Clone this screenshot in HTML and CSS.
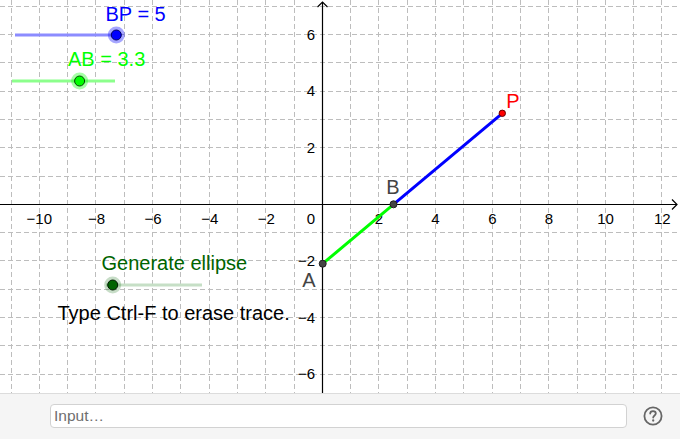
FILE: index.html
```html
<!DOCTYPE html>
<html>
<head>
<meta charset="utf-8">
<link rel="stylesheet" href="styles.css">
</head>
<body>
<div class="app">
  <div class="graph">
    <svg class="canvas" width="680" height="393" viewBox="0 0 680 393">
      <g class="grid">
        <line x1="11.5" y1="0" x2="11.5" y2="393"/>
        <line x1="39.5" y1="0" x2="39.5" y2="393"/>
        <line x1="67.5" y1="0" x2="67.5" y2="393"/>
        <line x1="95.5" y1="0" x2="95.5" y2="393"/>
        <line x1="124.5" y1="0" x2="124.5" y2="393"/>
        <line x1="152.5" y1="0" x2="152.5" y2="393"/>
        <line x1="180.5" y1="0" x2="180.5" y2="393"/>
        <line x1="209.5" y1="0" x2="209.5" y2="393"/>
        <line x1="237.5" y1="0" x2="237.5" y2="393"/>
        <line x1="265.5" y1="0" x2="265.5" y2="393"/>
        <line x1="294.5" y1="0" x2="294.5" y2="393"/>
        <line x1="350.5" y1="0" x2="350.5" y2="393"/>
        <line x1="378.5" y1="0" x2="378.5" y2="393"/>
        <line x1="407.5" y1="0" x2="407.5" y2="393"/>
        <line x1="435.5" y1="0" x2="435.5" y2="393"/>
        <line x1="463.5" y1="0" x2="463.5" y2="393"/>
        <line x1="492.5" y1="0" x2="492.5" y2="393"/>
        <line x1="520.5" y1="0" x2="520.5" y2="393"/>
        <line x1="548.5" y1="0" x2="548.5" y2="393"/>
        <line x1="577.5" y1="0" x2="577.5" y2="393"/>
        <line x1="605.5" y1="0" x2="605.5" y2="393"/>
        <line x1="633.5" y1="0" x2="633.5" y2="393"/>
        <line x1="661.5" y1="0" x2="661.5" y2="393"/>
        <line x1="0" y1="6.5" x2="680" y2="6.5"/>
        <line x1="0" y1="34.5" x2="680" y2="34.5"/>
        <line x1="0" y1="62.5" x2="680" y2="62.5"/>
        <line x1="0" y1="91.5" x2="680" y2="91.5"/>
        <line x1="0" y1="119.5" x2="680" y2="119.5"/>
        <line x1="0" y1="147.5" x2="680" y2="147.5"/>
        <line x1="0" y1="176.5" x2="680" y2="176.5"/>
        <line x1="0" y1="232.5" x2="680" y2="232.5"/>
        <line x1="0" y1="260.5" x2="680" y2="260.5"/>
        <line x1="0" y1="289.5" x2="680" y2="289.5"/>
        <line x1="0" y1="317.5" x2="680" y2="317.5"/>
        <line x1="0" y1="345.5" x2="680" y2="345.5"/>
        <line x1="0" y1="374.5" x2="680" y2="374.5"/>
      </g>
      <g class="axes">
        <line x1="0" y1="204.5" x2="677" y2="204.5"/>
        <polyline points="672,199.5 677,204.5 672,209.5"/>
        <line x1="322.5" y1="2" x2="322.5" y2="393"/>
        <polyline points="317.5,7 322.5,2 327.5,7"/>
      </g>
      <g class="ticks-x">
        <text x="39.3" y="224">−10</text>
        <text x="96.5" y="224">−8</text>
        <text x="153" y="224">−6</text>
        <text x="209.8" y="224">−4</text>
        <text x="266.3" y="224">−2</text>
        <text x="378.9" y="224">2</text>
        <text x="435.5" y="224">4</text>
        <text x="492.3" y="224">6</text>
        <text x="548.9" y="224">8</text>
        <text x="605.5" y="224">10</text>
        <text x="662.3" y="224">12</text>
      </g>
      <g class="ticks-y">
        <text x="315" y="224">0</text>
        <text x="315" y="40">6</text>
        <text x="315" y="96.3">4</text>
        <text x="315" y="152.8">2</text>
        <text x="315" y="266.3">−2</text>
        <text x="315" y="322.8">−4</text>
        <text x="315" y="379.3">−6</text>
      </g>

      <line class="seg-ab" x1="322.7" y1="263.7" x2="393.5" y2="204.3"/>
      <line class="seg-bp" x1="393.5" y1="204.3" x2="502.3" y2="113.3"/>
      <circle class="pt-dark" cx="322.7" cy="263.7" r="3.5"/>
      <circle class="pt-dark" cx="393.5" cy="204.3" r="3.5"/>
      <circle class="pt-red" cx="502.3" cy="113.3" r="3.2"/>
      <text class="lbl lbl-dark" x="386.3" y="193.5">B</text>
      <text class="lbl lbl-red" x="506.3" y="108.3">P</text>
      <text class="lbl lbl-dark" x="302.3" y="287.3">A</text>

      <text class="lbl lbl-blue" x="105.5" y="21">BP = 5</text>
      <line class="track-blue" x1="15" y1="35" x2="116" y2="35"/>
      <circle class="halo-blue" cx="116.3" cy="35" r="8.5"/>
      <circle class="knob-blue" cx="116.3" cy="35" r="5"/>

      <text class="lbl lbl-green" x="68" y="65.8">AB = 3.3</text>
      <line class="track-green" x1="12" y1="81" x2="115" y2="81"/>
      <circle class="halo-green" cx="79.6" cy="81" r="8.5"/>
      <circle class="knob-green" cx="79.6" cy="81" r="5"/>

      <text class="lbl lbl-dkgreen" x="101.5" y="269.5">Generate ellipse</text>
      <line class="track-dkgreen" x1="106" y1="285" x2="202" y2="285"/>
      <circle class="halo-dkgreen" cx="112.7" cy="285" r="8.5"/>
      <circle class="knob-dkgreen" cx="112.7" cy="285" r="5"/>

      <text class="lbl lbl-black" x="57.5" y="320">Type Ctrl-F to erase trace.</text>
    </svg>
  </div>
  <div class="inputbar">
    <div class="input">Input…</div>
    <svg class="help" width="20" height="20" viewBox="0 0 20 20">
      <circle cx="10" cy="10" r="8.6" fill="none" stroke="#666" stroke-width="1.8"/>
      <path d="M7.2 7.6 C7.2 5.9 8.5 5.1 10 5.1 C11.6 5.1 12.8 6 12.8 7.5 C12.8 9.4 10.2 9.5 10.2 11.6" fill="none" stroke="#666" stroke-width="1.8" stroke-linecap="round"/>
      <circle cx="10.2" cy="14.5" r="1.15" fill="#666"/>
    </svg>
  </div>
</div>
</body>
</html>
```

FILE: styles.css
```css
html, body {
  margin: 0;
  padding: 0;
  background: #ffffff;
}

.app {
  width: 680px;
  height: 439px;
  display: flex;
  flex-direction: column;
  overflow: hidden;
  font-family: "Liberation Sans", Arial, sans-serif;
}

.graph {
  height: 393px;
  flex: none;
  background: #ffffff;
}

.canvas {
  display: block;
}

.grid line {
  stroke: #bdbdbd;
  stroke-width: 1;
  stroke-dasharray: 5 3;
}

.axes line,
.axes polyline {
  stroke: #000000;
  stroke-width: 1.2;
  fill: none;
}

.ticks-x text,
.ticks-y text {
  font-family: "Liberation Sans", Arial, sans-serif;
  font-size: 15px;
  fill: #000000;
}

.ticks-x text {
  text-anchor: middle;
}

.ticks-y text {
  text-anchor: end;
}

.seg-ab {
  stroke: #00ff00;
  stroke-width: 3;
}

.seg-bp {
  stroke: #0000ff;
  stroke-width: 3;
}

.pt-dark {
  fill: #444444;
  stroke: #222222;
  stroke-width: 1;
}

.pt-red {
  fill: #ff0000;
  stroke: #660000;
  stroke-width: 1;
}

.lbl {
  font-family: "Liberation Sans", Arial, sans-serif;
  font-size: 20px;
}

.lbl-dark { fill: #444444; }
.lbl-red { fill: #ff0000; }
.lbl-blue { fill: #0000ff; }
.lbl-green { fill: #00ff00; }
.lbl-dkgreen { fill: #006400; }
.lbl-black { fill: #000000; }

.track-blue {
  stroke: #8c8cff;
  stroke-width: 3;
}

.halo-blue {
  fill: rgba(0, 0, 255, 0.35);
}

.knob-blue {
  fill: #0000ff;
  stroke: #000066;
  stroke-width: 1;
}

.track-green {
  stroke: #8cff8c;
  stroke-width: 3;
}

.halo-green {
  fill: rgba(0, 255, 0, 0.35);
}

.knob-green {
  fill: #00ff00;
  stroke: #004400;
  stroke-width: 1;
}

.track-dkgreen {
  stroke: #c6dfc6;
  stroke-width: 3;
}

.halo-dkgreen {
  fill: rgba(0, 100, 0, 0.22);
}

.knob-dkgreen {
  fill: #006400;
  stroke: #001a00;
  stroke-width: 1;
}

.inputbar {
  flex: 1;
  display: flex;
  align-items: center;
  padding: 0 0 2px 50px;
  border-top: 1px solid #dcdcdc;
  background: #f5f5f5;
}

.input {
  width: 577px;
  height: 24px;
  box-sizing: border-box;
  border: 1px solid #d2d2d2;
  border-radius: 4px;
  background: #ffffff;
  padding-left: 3px;
  font-family: "Liberation Sans", Arial, sans-serif;
  font-size: 15.5px;
  line-height: 22px;
  color: #6e6e6e;
}

.help {
  margin-left: 16px;
  display: block;
}
```
